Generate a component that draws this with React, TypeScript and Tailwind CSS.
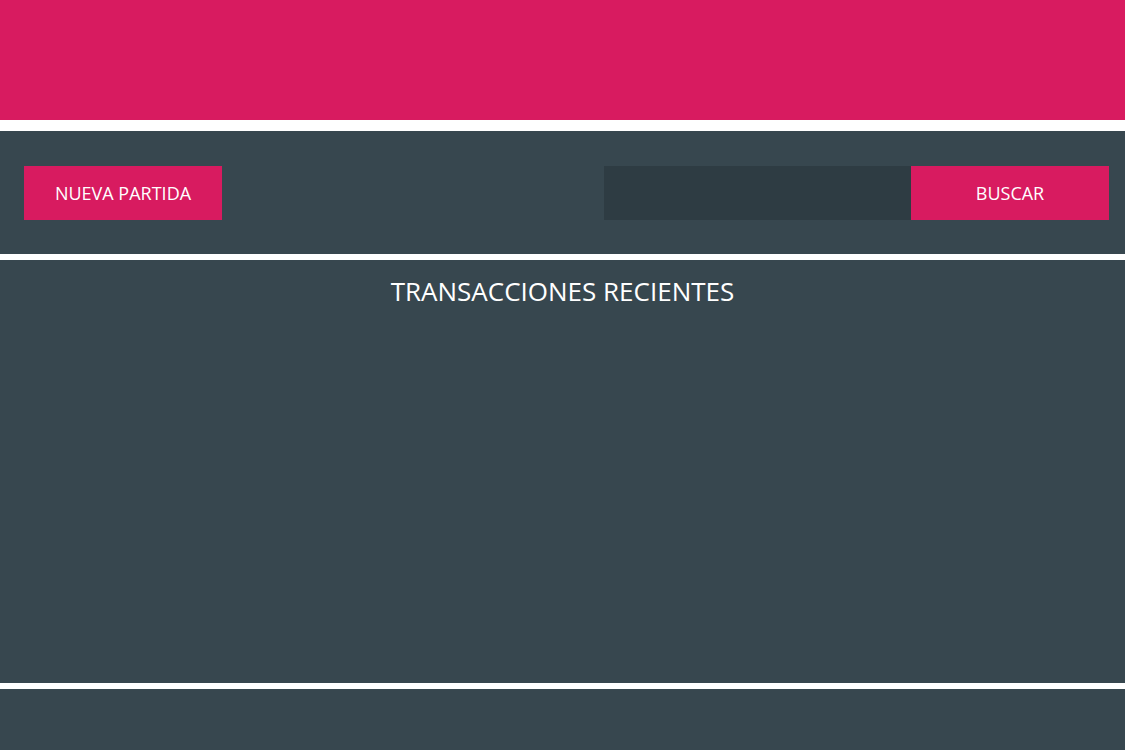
import React from "react";

const App = () => {
  return (
    <div className="min-h-screen bg-white font-['Open_Sans',sans-serif] flex flex-col">
      <header className="h-[120px] bg-[#d81b60]" />
      <section className="mt-[11px] h-[123px] bg-[#37474f] flex items-center justify-between pl-6 pr-4">
        <button className="w-[198px] h-[54px] bg-[#d81b60] text-white text-[18px] uppercase pt-px">
          Nueva Partida
        </button>
        <div className="flex items-center">
          <input className="w-[307px] h-[54px] bg-[#2e3c43] text-white px-3 outline-none" />
          <button className="w-[198px] h-[54px] bg-[#d81b60] text-white text-[18px] uppercase pt-px">
            Buscar
          </button>
        </div>
      </section>
      <section className="mt-[6px] h-[423px] bg-[#37474f] pt-[15px]">
        <h2 className="text-center text-white text-[26px] leading-8 uppercase">
          Transacciones Recientes
        </h2>
      </section>
      <footer className="mt-[6px] flex-1 bg-[#37474f]" />
    </div>
  );
};

export default App;
